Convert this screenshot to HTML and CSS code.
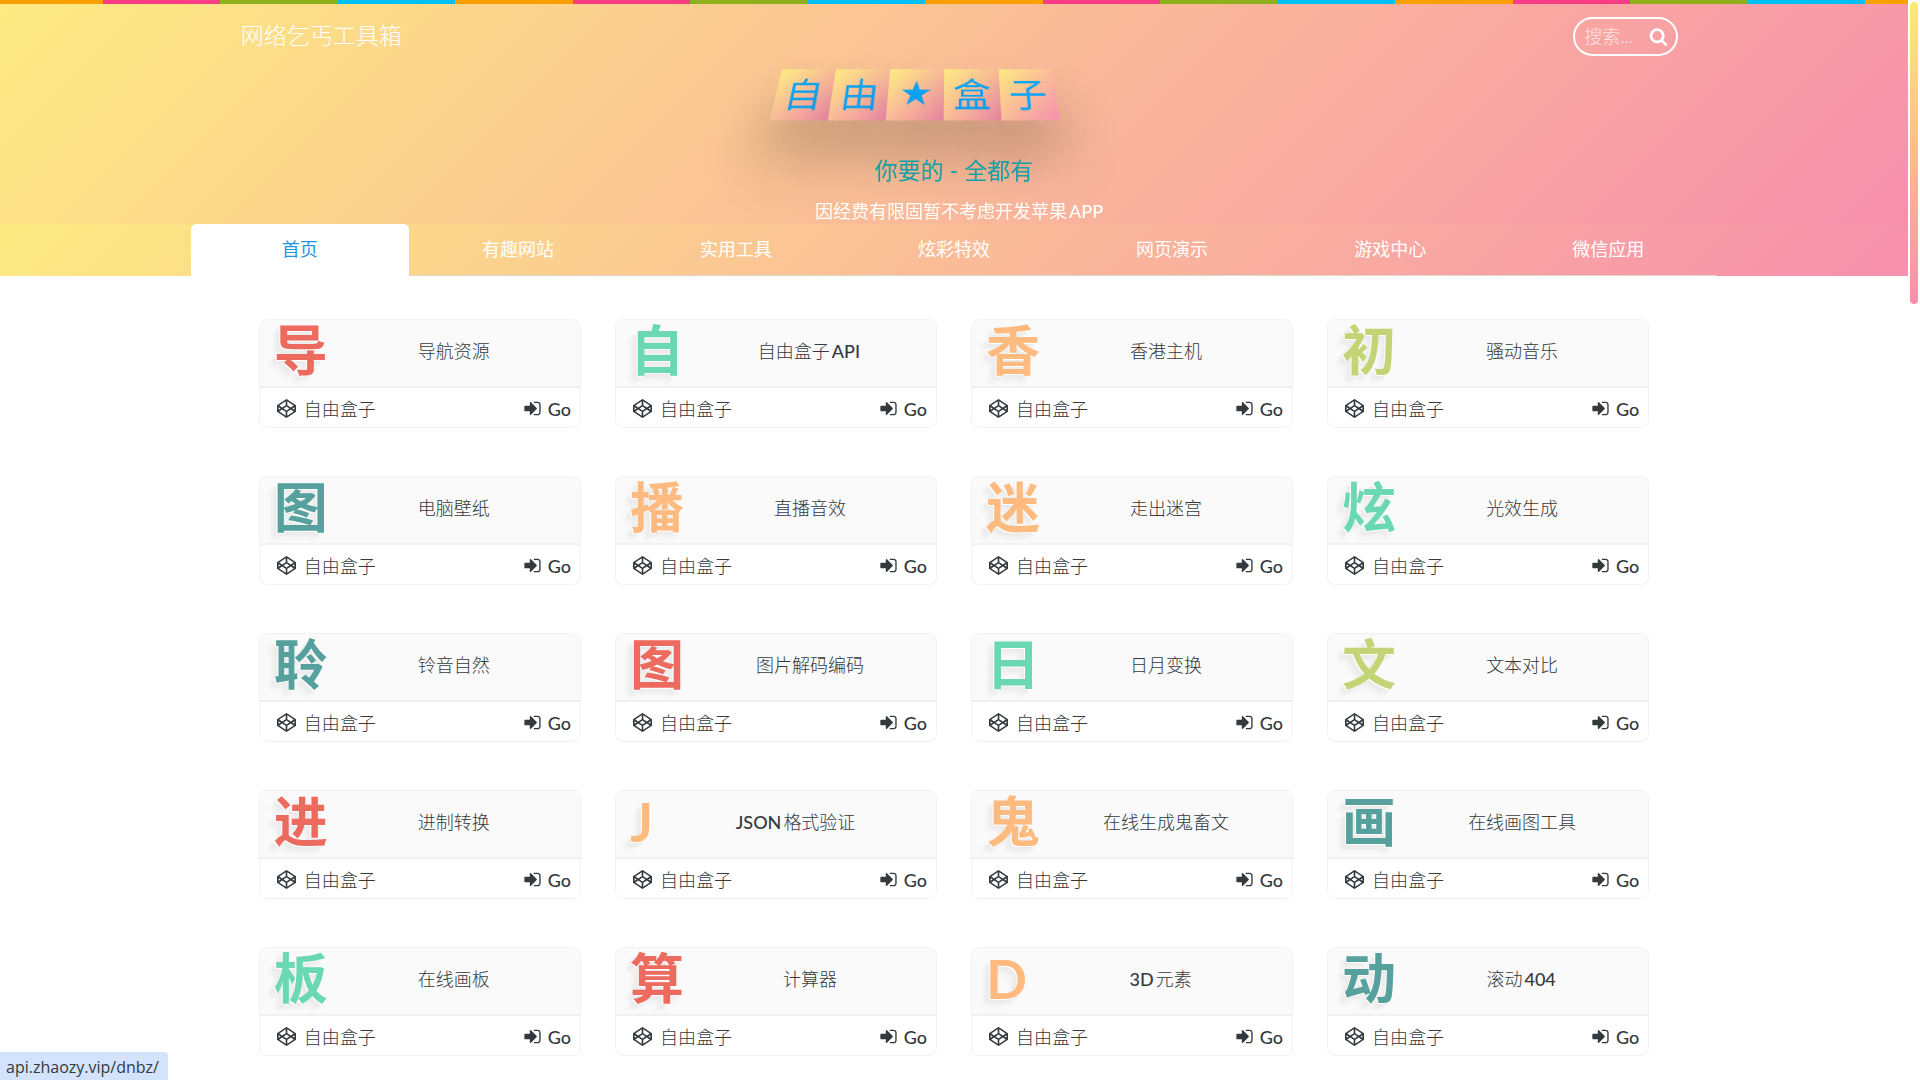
FILE: index.html
```html
<!DOCTYPE html>
<html lang="zh-CN">
<head>
<meta charset="utf-8">
<title>网络乞丐工具箱</title>
<link rel="stylesheet" href="styles.css">
</head>
<body>
<svg class="sprite" aria-hidden="true">
  <symbol id="codepen" viewBox="0 0 1792 1792"><path d="M216 1169l603 402v-359l-334-223zm-62-144l193-129-193-129v258zm819 546l603-402-269-180-334 223v359zm-77-494l272-182-272-182-272 182zm-411-274l334-223v-359l-603 402zm960 93l193 129v-258zm-138-93l269-180-603-402v359zm485-180v546q0 41-34 64l-819 546q-21 13-43 13t-43-13l-819-546q-34-23-34-64v-546q0-41 34-64l819-546q21-13 43-13t43 13l819 546q34 23 34 64z"/></symbol>
  <symbol id="signin" viewBox="0 0 1792 1792"><path d="M1312 896q0 26-19 45l-544 544q-19 19-45 19t-45-19-19-45v-288h-448q-26 0-45-19t-19-45v-384q0-26 19-45t45-19h448v-288q0-26 19-45t45-19 45 19l544 544q19 19 19 45zm352-352v704q0 119-84.500 203.500t-203.500 84.500h-320q-13 0-22.500-9.500t-9.500-22.500q0-4-1-20t-.5-26.500 3-23.500 10-19.500 20.500-6.500h320q66 0 113-47t47-113v-704q0-66-47-113t-113-47h-312l-11.500-1-11.500-3-8-5.500-7-9-2-13.500q0-4-1-20t-.5-26.500 3-23.500 10-19.500 20.500-6.500h320q119 0 203.500 84.500t84.500 203.500z"/></symbol>
  <symbol id="search" viewBox="0 0 1792 1792"><path d="M1216 832q0-185-131.500-316.500t-316.500-131.500-316.500 131.500-131.500 316.500 131.500 316.500 316.500 131.500 316.500-131.500 131.500-316.500zm512 832q0 52-38 90t-90 38q-54 0-90-38l-343-342q-179 124-399 124-143 0-273.500-55.500t-225-150-150-225-55.500-273.500 55.500-273.500 150-225 225-150 273.500-55.500 273.500 55.500 225 150 150 225 55.500 273.500q0 220-124 399l343 343q37 37 37 90z"/></symbol>
</svg>

<header class="hero">
  <div class="topbar">
    <a class="brand" href="#">网络乞丐工具箱</a>
    <form class="search" role="search">
      <input class="search-input" type="text" placeholder="搜索..." aria-label="搜索">
      <button class="search-button" type="button" aria-label="搜索"><svg class="icon"><use href="#search"/></svg></button>
    </form>
  </div>
  <h1 class="logo">
    <span class="logo-row"><span class="tile">自</span><span class="tile">由</span><span class="tile tile-star">★</span><span class="tile">盒</span><span class="tile">子</span></span>
  </h1>
  <p class="slogan">你要的 - 全都有</p>
  <p class="notice">因经费有限固暂不考虑开发苹果<span class="latin">APP</span></p>
</header>

<nav class="nav">
  <div class="tabs">
    <a class="tab tab-active" href="#">首页</a>
    <a class="tab" href="#">有趣网站</a>
    <a class="tab" href="#">实用工具</a>
    <a class="tab" href="#">炫彩特效</a>
    <a class="tab" href="#">网页演示</a>
    <a class="tab" href="#">游戏中心</a>
    <a class="tab" href="#">微信应用</a>
  </div>
</nav>

<main class="cards">
  <article class="card"><div class="card-head"><span class="glyph red">导</span><h2 class="card-title">导航资源</h2></div><div class="card-foot"><svg class="icon"><use href="#codepen"/></svg><span>自由盒子</span><a class="go" href="#"><svg class="icon"><use href="#signin"/></svg>Go</a></div></article>
  <article class="card"><div class="card-head"><span class="glyph green">自</span><h2 class="card-title">自由盒子<span class="latin">API</span></h2></div><div class="card-foot"><svg class="icon"><use href="#codepen"/></svg><span>自由盒子</span><a class="go" href="#"><svg class="icon"><use href="#signin"/></svg>Go</a></div></article>
  <article class="card"><div class="card-head"><span class="glyph orange">香</span><h2 class="card-title">香港主机</h2></div><div class="card-foot"><svg class="icon"><use href="#codepen"/></svg><span>自由盒子</span><a class="go" href="#"><svg class="icon"><use href="#signin"/></svg>Go</a></div></article>
  <article class="card"><div class="card-head"><span class="glyph lime">初</span><h2 class="card-title">骚动音乐</h2></div><div class="card-foot"><svg class="icon"><use href="#codepen"/></svg><span>自由盒子</span><a class="go" href="#"><svg class="icon"><use href="#signin"/></svg>Go</a></div></article>

  <article class="card"><div class="card-head"><span class="glyph teal">图</span><h2 class="card-title">电脑壁纸</h2></div><div class="card-foot"><svg class="icon"><use href="#codepen"/></svg><span>自由盒子</span><a class="go" href="#"><svg class="icon"><use href="#signin"/></svg>Go</a></div></article>
  <article class="card"><div class="card-head"><span class="glyph orange">播</span><h2 class="card-title">直播音效</h2></div><div class="card-foot"><svg class="icon"><use href="#codepen"/></svg><span>自由盒子</span><a class="go" href="#"><svg class="icon"><use href="#signin"/></svg>Go</a></div></article>
  <article class="card"><div class="card-head"><span class="glyph orange">迷</span><h2 class="card-title">走出迷宫</h2></div><div class="card-foot"><svg class="icon"><use href="#codepen"/></svg><span>自由盒子</span><a class="go" href="#"><svg class="icon"><use href="#signin"/></svg>Go</a></div></article>
  <article class="card"><div class="card-head"><span class="glyph green">炫</span><h2 class="card-title">光效生成</h2></div><div class="card-foot"><svg class="icon"><use href="#codepen"/></svg><span>自由盒子</span><a class="go" href="#"><svg class="icon"><use href="#signin"/></svg>Go</a></div></article>

  <article class="card"><div class="card-head"><span class="glyph teal">聆</span><h2 class="card-title">铃音自然</h2></div><div class="card-foot"><svg class="icon"><use href="#codepen"/></svg><span>自由盒子</span><a class="go" href="#"><svg class="icon"><use href="#signin"/></svg>Go</a></div></article>
  <article class="card"><div class="card-head"><span class="glyph red">图</span><h2 class="card-title">图片解码编码</h2></div><div class="card-foot"><svg class="icon"><use href="#codepen"/></svg><span>自由盒子</span><a class="go" href="#"><svg class="icon"><use href="#signin"/></svg>Go</a></div></article>
  <article class="card"><div class="card-head"><span class="glyph green">日</span><h2 class="card-title">日月变换</h2></div><div class="card-foot"><svg class="icon"><use href="#codepen"/></svg><span>自由盒子</span><a class="go" href="#"><svg class="icon"><use href="#signin"/></svg>Go</a></div></article>
  <article class="card"><div class="card-head"><span class="glyph lime">文</span><h2 class="card-title">文本对比</h2></div><div class="card-foot"><svg class="icon"><use href="#codepen"/></svg><span>自由盒子</span><a class="go" href="#"><svg class="icon"><use href="#signin"/></svg>Go</a></div></article>

  <article class="card"><div class="card-head"><span class="glyph red">进</span><h2 class="card-title">进制转换</h2></div><div class="card-foot"><svg class="icon"><use href="#codepen"/></svg><span>自由盒子</span><a class="go" href="#"><svg class="icon"><use href="#signin"/></svg>Go</a></div></article>
  <article class="card"><div class="card-head"><span class="glyph orange">J</span><h2 class="card-title"><span class="latin">JSON</span>格式验证</h2></div><div class="card-foot"><svg class="icon"><use href="#codepen"/></svg><span>自由盒子</span><a class="go" href="#"><svg class="icon"><use href="#signin"/></svg>Go</a></div></article>
  <article class="card"><div class="card-head"><span class="glyph orange">鬼</span><h2 class="card-title">在线生成鬼畜文</h2></div><div class="card-foot"><svg class="icon"><use href="#codepen"/></svg><span>自由盒子</span><a class="go" href="#"><svg class="icon"><use href="#signin"/></svg>Go</a></div></article>
  <article class="card"><div class="card-head"><span class="glyph teal">画</span><h2 class="card-title">在线画图工具</h2></div><div class="card-foot"><svg class="icon"><use href="#codepen"/></svg><span>自由盒子</span><a class="go" href="#"><svg class="icon"><use href="#signin"/></svg>Go</a></div></article>

  <article class="card"><div class="card-head"><span class="glyph green">板</span><h2 class="card-title">在线画板</h2></div><div class="card-foot"><svg class="icon"><use href="#codepen"/></svg><span>自由盒子</span><a class="go" href="#"><svg class="icon"><use href="#signin"/></svg>Go</a></div></article>
  <article class="card"><div class="card-head"><span class="glyph red">算</span><h2 class="card-title">计算器</h2></div><div class="card-foot"><svg class="icon"><use href="#codepen"/></svg><span>自由盒子</span><a class="go" href="#"><svg class="icon"><use href="#signin"/></svg>Go</a></div></article>
  <article class="card"><div class="card-head"><span class="glyph orange">D</span><h2 class="card-title"><span class="latin">3D</span>元素</h2></div><div class="card-foot"><svg class="icon"><use href="#codepen"/></svg><span>自由盒子</span><a class="go" href="#"><svg class="icon"><use href="#signin"/></svg>Go</a></div></article>
  <article class="card"><div class="card-head"><span class="glyph teal">动</span><h2 class="card-title">滚动<span class="latin">404</span></h2></div><div class="card-foot"><svg class="icon"><use href="#codepen"/></svg><span>自由盒子</span><a class="go" href="#"><svg class="icon"><use href="#signin"/></svg>Go</a></div></article>
</main>

<div class="scroll-thumb"></div>
<div class="status">api.zhaozy.vip/dnbz/</div>
</body>
</html>
```

FILE: styles.css
```css
:root {
  --warm: linear-gradient(135deg, #fdeb82, #f78fad);
  --ink: #34393d;
}

* { box-sizing: border-box; }

body {
  margin: 0;
  padding-right: 12px;
  background: #fff;
  color: var(--ink);
  font-family: Lato, "Noto Sans CJK SC", sans-serif;
  font-size: 18px;
  font-weight: 300;
  line-height: 24px;
}

a { color: inherit; text-decoration: none; }
h1, h2, p { margin: 0; font-weight: inherit; }
.sprite { display: none; }
.icon { display: block; width: 19px; height: 19px; fill: currentColor; }
.latin { margin: 0 2px; font-weight: 500; }

/* Header */
.hero {
  position: relative;
  height: 224px;
  background: var(--warm);
  color: #fff;
  text-align: center;
}
.hero::before {
  content: "";
  display: block;
  height: 4px;
  background: repeating-linear-gradient(90deg, #f9a000 0 118px, #f93c83 118px 235px, #8fb01a 235px 353px, #00c0f5 353px 470px) -15px 0 / 470px 4px;
}
.topbar {
  display: flex;
  align-items: center;
  justify-content: space-between;
  width: 80%;
  margin: 0 auto;
  padding: 13px 39px 0 50px;
}
.brand { padding-bottom: 4px; font-size: 23px; }
.search {
  display: flex;
  align-items: center;
  width: 105px;
  height: 39px;
  padding: 0 8px 0 9px;
  border: 2px solid #fff;
  border-radius: 20px;
}
.search-input {
  flex: 1;
  min-width: 0;
  padding: 0 0 2px;
  border: 0;
  outline: 0;
  background: none;
  color: #fff;
  font: inherit;
}
.search-input::placeholder { color: #fff; opacity: 0.7; }
.search-button {
  padding: 0;
  border: 0;
  background: none;
  color: #fff;
}

.logo {
  padding: 9px 76px 0 0;
  perspective: 400px;
  perspective-origin: 50% 38px;
}
.logo-row {
  display: flex;
  justify-content: center;
  transform: rotateX(28deg);
}
.tile {
  width: 56px;
  height: 58px;
  background: var(--warm);
  box-shadow: 0 36px 56px rgba(0, 0, 0, 0.24);
  color: #0aa4f5;
  font-size: 38px;
  font-weight: 400;
  line-height: 56px;
}
.tile-star { font-family: "DejaVu Sans", sans-serif; }

.slogan {
  position: relative;
  padding-top: 35px;
  color: #159fa6;
  font-size: 23px;
  font-weight: 400;
}
.notice {
  position: relative;
  padding: 17px 0 0 12px;
  font-weight: 400;
}

/* Navigation */
.nav { background: var(--warm); color: #fff; }
.tabs { display: flex; width: 80%; margin: 0 auto; }
.tab {
  flex: 1;
  height: 52px;
  border: 1px solid transparent;
  border-bottom-color: #ddd8c8;
  border-radius: 5px 5px 0 0;
  font-weight: 400;
  line-height: 48px;
  text-align: center;
}
.tab-active {
  border-color: #fff;
  background: #fff;
  color: #2494dc;
}

/* Cards */
.cards {
  display: grid;
  grid-template-columns: repeat(4, 1fr);
  gap: 48px 34px;
  width: 80%;
  margin: 0 auto;
  padding: 43px 68px 24px;
}
.card { border: 1px solid #f2f2f2; border-radius: 8px; }
.card-head {
  display: flex;
  align-items: center;
  height: 68px;
  padding: 0 0 4px 14px;
  border-bottom: 2px solid #f0f0f0;
  border-radius: 8px 8px 0 0;
  background: #fafafa;
}
.glyph {
  font-size: 54px;
  font-weight: 700;
  line-height: 62px;
  text-shadow: -1px 1px 0 #fff, -4px 4px 3px #ebebeb, -7px 7px 4px #f0f0f0;
}
.red { color: #ed6a5f; }
.green { color: #6bd8b4; }
.orange { color: #ffba80; }
.lime { color: #c3d477; }
.teal { color: #56a09e; }
.card-title { flex: 1; font-size: 18px; text-align: center; }
.card-foot {
  display: flex;
  align-items: center;
  gap: 8px;
  height: 39px;
  padding: 2px 9px 0 17px;
}
.go { display: flex; align-items: center; gap: 6px; margin-left: auto; font-weight: 500; }

/* Overlays of the browser window */
.scroll-thumb {
  position: fixed;
  top: 2px;
  right: 2px;
  width: 8px;
  height: 302px;
  border-radius: 4px;
  background: linear-gradient(#fdeb71, #f78fad);
}
.status {
  position: fixed;
  bottom: 0;
  left: 0;
  padding: 3px 9px 1px 6px;
  border-radius: 0 4px 0 0;
  background: #d3e3fd;
  font-family: "Open Sans", sans-serif;
  font-size: 16px;
  font-weight: 400;
}
```
